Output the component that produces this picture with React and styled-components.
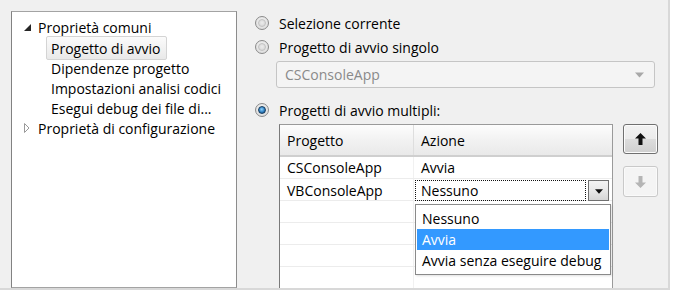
import React from 'react';
import styled, { createGlobalStyle } from 'styled-components';

const GlobalStyle = createGlobalStyle`
  html, body {
    margin: 0;
    padding: 0;
    background: #ffffff;
  }
  body {
    font-family: "Open Sans", "Noto Sans", sans-serif;
    font-size: 14px;
    color: #000000;
  }
`;

const Frame = styled.div`
  width: 670px;
  height: 290px;
  box-sizing: border-box;
  background: #f0f0f0;
  border-right: 2px solid #d8d8d8;
  border-bottom: 2px solid #d8d8d8;
  display: flex;
  align-items: flex-start;
  padding: 11px 0 0 11px;
  overflow: hidden;
`;

const TreePanel = styled.div`
  width: 226px;
  height: 277px;
  box-sizing: border-box;
  background: #ffffff;
  border: 1px solid #a3a3a3;
  border-left-color: #828282;
  border-right-color: #8c8c8c;
  padding: 5px 0 0 12px;
  flex-shrink: 0;
`;

const TreeRow = styled.div`
  display: flex;
  align-items: center;
  height: 20px;
  margin-left: ${p => (p.$level ? 22 : 0)}px;

  &:first-child {
    height: 21px;
  }
`;

const Toggle = styled.span`
  width: 14px;
  display: flex;
  align-items: center;
  justify-content: flex-start;
`;

const TreeLabel = styled.span`
  display: flex;
  align-items: center;
  height: 22px;
  margin: -1px 0;
  padding: 0 5px 0 4px;
  border: 1px solid ${p => (p.$selected ? '#d4d4d4' : 'transparent')};
  border-radius: 2px;
  background: ${p => (p.$selected ? 'linear-gradient(#fbfbfb, #e9e9e9)' : 'transparent')};
  white-space: nowrap;
`;

const RightPane = styled.div`
  flex: 1;
  min-width: 0;
  display: flex;
  flex-direction: column;
  padding-left: 18px;

  & > * {
    flex-shrink: 0;
  }
`;

const RadioRow = styled.div`
  display: flex;
  align-items: center;
  height: 24px;
  gap: 10px;
  margin-top: ${p => p.$mt || 0}px;
`;

const RadioCircle = styled.span`
  width: 14px;
  height: 14px;
  box-sizing: border-box;
  border-radius: 50%;
  border: 1px solid #8a8a8a;
  background: radial-gradient(circle at 50% 40%, #f6f6f6 0%, #e0e0e0 70%, #d0d0d0 100%);
  display: flex;
  align-items: center;
  justify-content: center;

  &::after {
    content: '';
    width: 8px;
    height: 8px;
    border-radius: 50%;
    box-sizing: border-box;
    background: ${p =>
      p.$checked
        ? 'radial-gradient(circle at 45% 40%, #8fd3ff 0%, #2f7fc0 55%, #0f3f6e 100%)'
        : 'radial-gradient(circle at 50% 45%, #ececec 0%, #d2d2d2 100%)'};
    border: 1px solid ${p => (p.$checked ? '#163c5e' : '#c2c2c2')};
  }
`;

const ComboBox = styled.div`
  margin: 2px 13px 0 21px;
  height: 27px;
  box-sizing: border-box;
  border: 1px solid #c5c5c5;
  border-radius: 3px;
  background: #f4f4f4;
  color: #8a8a8a;
  display: flex;
  align-items: center;
  justify-content: space-between;
  padding: 0 10px 0 8px;
`;

const TableArea = styled.div`
  display: flex;
  align-items: flex-start;
  margin: 2px 0 0 24px;
  gap: 10px;
`;

const TableWrap = styled.div`
  position: relative;
  width: 334px;
  height: 180px;
  box-sizing: border-box;
  background: #ffffff;
  border: 1px solid #9a9a9a;
  border-left-color: #7a7a7a;
  flex-shrink: 0;
`;

const HeaderRow = styled.div`
  display: grid;
  grid-template-columns: 134px 1fr;
  height: 30px;
  background: linear-gradient(#fdfdfd, #f2f2f2 50%, #e9e9e9);
  border-bottom: 2px solid #cfcfcf;
`;

const HeaderCell = styled.div`
  display: flex;
  align-items: center;
  padding-left: 7px;
  border-right: ${p => (p.$first ? '1px solid #dedede' : 'none')};
`;

const BodyRow = styled.div`
  display: grid;
  grid-template-columns: 134px 1fr;
  height: 22px;
  box-sizing: border-box;
  border-bottom: 1px solid #ececec;

  &:first-of-type {
    height: 23px;
  }
`;

const Cell = styled.div`
  display: flex;
  align-items: center;
  padding-left: 7px;
  border-right: ${p => (p.$first ? '1px solid #f1f1f1' : 'none')};
  white-space: nowrap;
`;

const EditCell = styled.div`
  display: flex;
  align-items: stretch;
  gap: 2px;
  padding: 1px 3px 0 1px;
`;

const FocusBox = styled.div`
  flex: 1;
  border: 1px dotted #111;
  display: flex;
  align-items: center;
  padding-left: 5px;
`;

const DropButton = styled.div`
  width: 21px;
  box-sizing: border-box;
  border: 1px solid #707070;
  background: linear-gradient(#f3f3f3, #e8e8e8 50%, #d6d6d6);
  display: flex;
  align-items: center;
  justify-content: center;
  padding-top: 2px;
`;

const Popup = styled.div`
  position: absolute;
  left: 135px;
  top: 79px;
  width: 196px;
  box-sizing: border-box;
  background: #ffffff;
  border: 1px solid #8a8a8a;
  padding: 3px 1px 3px;
  box-shadow: 1px 1px 2px rgba(0, 0, 0, 0.12);
`;

const PopupItem = styled.div`
  height: 21px;
  display: flex;
  align-items: center;
  padding-left: 5px;
  white-space: nowrap;
  background: ${p => (p.$active ? '#3399ff' : 'transparent')};
  color: ${p => (p.$active ? '#ffffff' : '#000000')};
`;

const MoveButtons = styled.div`
  display: flex;
  flex-direction: column;
  gap: 12px;
`;

const MoveButton = styled.div`
  width: 35px;
  height: ${p => (p.$disabled ? 31 : 30)}px;
  box-sizing: border-box;
  border-radius: 3px;
  border: 1px solid ${p => (p.$disabled ? '#c9c9c9' : '#707070')};
  background: ${p =>
    p.$disabled
      ? '#f4f4f4'
      : 'linear-gradient(#f2f2f2, #ebebeb 50%, #dddddd 50%, #cfcfcf)'};
  box-shadow: inset 0 0 0 1px ${p => (p.$disabled ? '#fafafa' : '#fcfcfc')};
  display: flex;
  align-items: center;
  justify-content: center;
`;

const ExpandedIcon = () => (
  <svg width="7" height="7" viewBox="0 0 7 7">
    <path d="M7 0 L7 7 L0 7 Z" fill="#262626" />
  </svg>
);

const CollapsedIcon = () => (
  <svg width="6" height="10" viewBox="0 0 6 10">
    <path d="M0.5 0.5 L5 5 L0.5 9.5 Z" fill="#ffffff" stroke="#9a9a9a" strokeWidth="1" />
  </svg>
);

const DownTriangle = ({ color = '#111', w = 9 }) => (
  <svg width={w} height={Math.ceil(w / 2) + 1} viewBox="0 0 9 5">
    <path d="M0 0 L9 0 L4.5 5 Z" fill={color} />
  </svg>
);

const Arrow = ({ up, color }) => (
  <svg width="11" height="12" viewBox="0 0 11 12" style={up ? undefined : { transform: 'rotate(180deg)' }}>
    <path d="M5.5 0 L11 5.5 L7.5 5.5 L7.5 12 L3.5 12 L3.5 5.5 L0 5.5 Z" fill={color} />
  </svg>
);

const children = [
  'Progetto di avvio',
  'Dipendenze progetto',
  'Impostazioni analisi codici',
  'Esegui debug dei file di...',
];

const projects = [
  ['CSConsoleApp', 'Avvia'],
  ['VBConsoleApp', null],
  ['', ''],
  ['', ''],
  ['', ''],
  ['', ''],
];

export default function App() {
  return (
    <>
      <GlobalStyle />
      <Frame>
        <TreePanel>
          <TreeRow>
            <Toggle><ExpandedIcon /></Toggle>
            <span>Proprietà comuni</span>
          </TreeRow>
          {children.map((c, i) => (
            <TreeRow key={c} $level={1}>
              <TreeLabel $selected={i === 0}>{c}</TreeLabel>
            </TreeRow>
          ))}
          <TreeRow>
            <Toggle><CollapsedIcon /></Toggle>
            <span>Proprietà di configurazione</span>
          </TreeRow>
        </TreePanel>

        <RightPane>
          <RadioRow>
            <RadioCircle />
            <span>Selezione corrente</span>
          </RadioRow>
          <RadioRow>
            <RadioCircle />
            <span>Progetto di avvio singolo</span>
          </RadioRow>
          <ComboBox>
            <span>CSConsoleApp</span>
            <DownTriangle color="#a8a8a8" w={9} />
          </ComboBox>
          <RadioRow $mt={10}>
            <RadioCircle $checked />
            <span>Progetti di avvio multipli:</span>
          </RadioRow>

          <TableArea>
            <TableWrap>
              <HeaderRow>
                <HeaderCell $first>Progetto</HeaderCell>
                <HeaderCell>Azione</HeaderCell>
              </HeaderRow>
              {projects.map(([name, action], i) => (
                <BodyRow key={i}>
                  <Cell $first>{name}</Cell>
                  {action === null ? (
                    <EditCell>
                      <FocusBox>Nessuno</FocusBox>
                      <DropButton><DownTriangle w={8} /></DropButton>
                    </EditCell>
                  ) : (
                    <Cell>{action}</Cell>
                  )}
                </BodyRow>
              ))}
              <Popup>
                <PopupItem>Nessuno</PopupItem>
                <PopupItem $active>Avvia</PopupItem>
                <PopupItem>Avvia senza eseguire debug</PopupItem>
              </Popup>
            </TableWrap>
            <MoveButtons>
              <MoveButton><Arrow up color="#111" /></MoveButton>
              <MoveButton $disabled><Arrow color="#b5b5b5" /></MoveButton>
            </MoveButtons>
          </TableArea>
        </RightPane>
      </Frame>
    </>
  );
}
